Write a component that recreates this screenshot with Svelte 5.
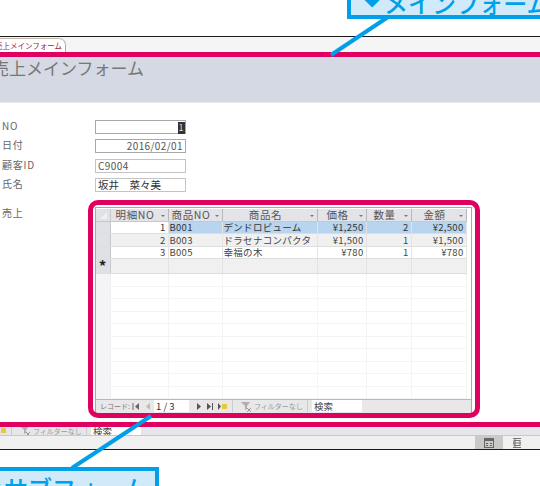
<script lang="ts">
  const fields = [
    { label: '日付', value: '2016/02/01', cls: 'right' },
    { label: '顧客ID', value: 'C9004', cls: 'soft' },
    { label: '氏名', value: '坂井　菜々美', cls: 'soft name' },
  ];

  const columns = ['明細NO', '商品NO', '商品名', '価格', '数量', '金額'];

  const rows = [
    { id: 1, code: 'B001', name: 'デンドロビューム', price: '¥1,250', qty: 2, total: '¥2,500' },
    { id: 2, code: 'B003', name: 'ドラセナコンパクタ', price: '¥1,500', qty: 1, total: '¥1,500' },
    { id: 3, code: 'B005', name: '幸福の木', price: '¥780', qty: 1, total: '¥780' },
  ];

  const blanks = Array(10).fill(0);
</script>

{#snippet navbar(record)}
  <div class="nav-inner">
    <span class="nav-label">レコード:</span>
    <svg class="nav-first" width="8" height="7" viewBox="0 0 8 7"><path d="M1 0v7" stroke="#666" /><path d="M7 0v7L3 3.500z" fill="#666" /></svg>
    <svg class="nav-prev" width="5" height="7" viewBox="0 0 5 7"><path d="M4 0v7L0 3.500z" fill="#bbb" /></svg>
    <span class="nav-record">{record}</span>
    <svg class="nav-next" width="5" height="7" viewBox="0 0 5 7"><path d="M1 0v7l4-3.500z" fill="#555" /></svg>
    <svg class="nav-last" width="7" height="7" viewBox="0 0 7 7"><path d="M0 0v7l4-3.500z" fill="#555" /><path d="M5.500 0v7" stroke="#555" /></svg>
    <svg class="nav-new" width="9" height="7" viewBox="0 0 9 7"><path d="M0 0v7l3-3.500z" fill="#555" /><rect x="4" y="1" width="5" height="5" fill="#e8c840" /></svg>
    <span class="nav-sep"></span>
    <svg class="nav-filter" width="11" height="11" viewBox="0 0 11 11"><path d="M0 1h9L6 5v3L4 9V5z" fill="#b0b0b0" /><path d="M6 7l4 4M10 7l-4 4" stroke="#999" /></svg>
    <span class="nav-nofilter">フィルターなし</span>
    <span class="nav-search">検索</span>
  </div>
{/snippet}

<div class="page">
  <div class="window">
    <div class="tabs">
      <div class="tab">売上メインフォーム</div>
    </div>
    <div class="banner">売上メインフォーム</div>

    <div class="detail">
      <div class="fields">
        <span class="field-label">NO</span>
        <div class="field-box right current"><span class="caret">1</span></div>
        {#each fields as f}
          <span class="field-label">{f.label}</span>
          <div class="field-box {f.cls}">{f.value}</div>
        {/each}
      </div>

      <div class="sales">
        <span class="field-label">売上</span>
        <div class="subform">
          <div class="sheet">
            <table>
              <colgroup>
                <col style="width: 14px" />
                <col style="width: 58px" />
                <col style="width: 54px" />
                <col style="width: 95px" />
                <col style="width: 49px" />
                <col style="width: 45px" />
                <col style="width: 55px" />
              </colgroup>
              <thead>
                <tr>
                  <th class="selector corner"><i></i></th>
                  {#each columns as c}
                    <th><span>{c}</span><i class="sort"></i></th>
                  {/each}
                </tr>
              </thead>
              <tbody>
                {#each rows as r, i}
                  <tr class:picked={i === 0} class:odd={i === 1}>
                    <td class="selector"></td>
                    <td class="num">{r.id}</td>
                    <td>{r.code}</td>
                    <td>{r.name}</td>
                    <td class="num">{r.price}</td>
                    <td class="num">{r.qty}</td>
                    <td class="num">{r.total}</td>
                  </tr>
                {/each}
                <tr class="newrow">
                  <td class="selector star">*</td>
                  <td></td><td></td><td></td><td></td><td></td><td></td>
                </tr>
                {#each blanks as _}
                  <tr class="blank">
                    <td class="selector"></td>
                    <td></td><td></td><td></td><td></td><td></td><td></td>
                  </tr>
                {/each}
              </tbody>
            </table>
          </div>
          <div class="subnav">{@render navbar('1 / 3')}</div>
        </div>
      </div>
    </div>

    <div class="mainnav">{@render navbar('1 / 6')}</div>

    <div class="status">
      <span class="view active">
        <svg width="10" height="10" viewBox="0 0 10 10"><rect x="0.500" y="0.500" width="9" height="9" fill="none" stroke="#666" /><path d="M0 2h10" stroke="#666" stroke-width="2" /><path d="M2 5.500h2M6 5.500h2M2 7.500h2M6 7.500h2" stroke="#666" /></svg>
      </span>
      <span class="view">
        <svg width="10" height="10" viewBox="0 0 10 10"><path d="M1 .5h8M1 9.500h8M1 5h8M3 .5v9" fill="none" stroke="#777" /><rect x="2" y="2.500" width="6" height="5" fill="none" stroke="#777" /></svg>
      </span>
      <span class="view">
        <svg width="10" height="10" viewBox="0 0 10 10"><rect x="0.500" y="0.500" width="9" height="9" fill="none" stroke="#777" /></svg>
      </span>
    </div>
  </div>

  <div class="pink-main"></div>
  <div class="pink-sub"></div>

  <svg class="leaders" width="540" height="486" viewBox="0 0 540 486">
    <path d="M331 55L388 17M151 416L72 468" stroke="#00a0e9" stroke-width="4" fill="none" />
  </svg>

  <div class="callout callout-main"><span class="mark">◆</span>メインフォーム</div>
  <div class="callout callout-sub"><span class="mark">◆</span>サブフォーム</div>
</div>

<style>
  :global(body) {
    margin: 0;
    background: #fff;
  }
  .page {
    position: relative;
    width: 540px;
    height: 486px;
    overflow: hidden;
    padding-top: 36px;
    box-sizing: border-box;
    font-family: "Noto Sans CJK JP", "Liberation Sans", sans-serif;
    font-size: 10px;
    color: #444;
  }
  .window {
    border-top: 1px solid #1a1a1a;
    border-bottom: 1px solid #1a1a1a;
    height: 414px;
    box-sizing: border-box;
    display: flex;
    flex-direction: column;
    overflow: hidden;
  }
  .tabs {
    height: 15px;
    background: #f5f5f5;
    flex-shrink: 0;
    padding-top: 1px;
    box-sizing: border-box;
  }
  .tab {
    width: 66px;
    height: 14px;
    box-sizing: border-box;
    background: #fff;
    border-top: 1px solid #c8b8a8;
    border-right: 1px solid #b8a898;
    border-radius: 0 7px 0 0;
    font-size: 7.500px;
    line-height: 14px;
    color: #a02040;
    white-space: nowrap;
    overflow: hidden;
    text-indent: -5px;
  }
  .banner {
    height: 51px;
    flex-shrink: 0;
    padding-top: 3px;
    box-sizing: border-box;
    background: #d5d9e3;
    border-bottom: 1px solid #e8e8ec;
    font-size: 17px;
    line-height: 26px;
    color: #777;
    white-space: nowrap;
    text-indent: -8px;
    overflow: hidden;
  }
  .detail {
    height: 321px;
    flex-shrink: 0;
    padding: 17px 0 0 2px;
    box-sizing: border-box;
  }
  .fields {
    display: grid;
    grid-template-columns: 93px 91px;
    grid-auto-rows: 14px;
    row-gap: 5.300px;
  }
  .field-label {
    font-size: 10px;
    line-height: 12px;
    letter-spacing: 0.8px;
    color: #666;
  }
  .field-box {
    box-sizing: border-box;
    height: 14px;
    border: 1px solid #a8a8a8;
    background: #fff;
    padding: 0 2px;
    font-size: 10px;
    line-height: 12px;
    letter-spacing: 0.4px;
    color: #555;
    white-space: nowrap;
  }
  .field-box.right {
    text-align: right;
  }
  .field-box.soft {
    border-color: #c4c4c4;
  }
  .field-box.name {
    font-size: 10.500px;
    letter-spacing: 0;
    color: #333;
  }
  .field-box.current {
    padding-right: 0;
  }
  .caret {
    display: inline-block;
    background: #333;
    color: #ddd;
    padding: 0 1px;
    font-size: 9px;
    height: 12px;
  }
  .sales {
    display: grid;
    grid-template-columns: 93px 377px;
    margin-top: 15px;
  }
  .subform {
    height: 207px;
    box-sizing: border-box;
    border: 1px solid #a8a8a8;
    background: #fff;
    display: flex;
    flex-direction: column;
  }
  .sheet {
    flex: 1;
    min-height: 0;
    padding-top: 1px;
    overflow: hidden;
  }
  table {
    width: 370px;
    table-layout: fixed;
    border-collapse: collapse;
    font-size: 9.500px;
    letter-spacing: 0.3px;
    color: #444;
  }
  th {
    height: 12px;
    padding: 0 8px 0 0;
    box-sizing: border-box;
    background: #e4e4e8;
    border-right: 1px solid #b8b8bc;
    border-bottom: 1px solid #c8c8cc;
    font-weight: 400;
    font-size: 10.500px;
    letter-spacing: 0.6px;
    line-height: 12px;
    color: #555;
    position: relative;
    white-space: nowrap;
    text-align: center;
    overflow: hidden;
  }
  .sort {
    position: absolute;
    right: 3px;
    top: 6px;
    border-left: 2px solid transparent;
    border-right: 2px solid transparent;
    border-top: 2px solid #777;
  }
  .corner i {
    position: absolute;
    right: 3px;
    bottom: 2px;
    border-left: 7px solid transparent;
    border-bottom: 7px solid #f0f0f2;
  }
  td {
    height: 12.500px;
    padding: 0 2px 0 1px;
    border-right: 1px solid #e4e4e4;
    border-bottom: 1px solid #dedede;
    line-height: 11px;
    white-space: nowrap;
    overflow: hidden;
    box-sizing: border-box;
  }
  .num {
    text-align: right;
  }
  th.selector,
  td.selector {
    padding: 0;
    background: #dfe1e6;
    border-right: 1px solid #c8c8cc;
  }
  .picked td {
    background: #b8d4ee;
    color: #333;
  }
  .picked td:nth-child(2) {
    background: #fff;
  }
  .picked td.selector {
    background: #dfe1e6;
  }
  .odd td,
  .newrow td {
    background: #f0f0f0;
  }
  .odd td.selector,
  .newrow td.selector {
    background: #dfe1e6;
  }
  td.star {
    text-align: center;
    font-size: 15px;
    font-weight: 700;
    color: #222;
    line-height: 14px;
  }
  .blank td {
    border-right-color: #f4f4f4;
    border-bottom-color: #f4f4f4;
  }
  .blank td.selector {
    background: #f4f4f6;
    border-right-color: #eee;
  }
  .subnav,
  .mainnav {
    flex-shrink: 0;
    overflow: hidden;
  }
  .subnav {
    height: 14px;
    background: #e8e8e8;
    border-top: 1px solid #b8b8b8;
    box-sizing: border-box;
  }
  .mainnav {
    height: 12px;
    background: #e6e6ea;
    border-bottom: 1px solid #c8c8c8;
    box-sizing: border-box;
  }
  .mainnav .nav-inner {
    margin-left: -125px;
  }
  .nav-inner {
    display: flex;
    align-items: center;
    width: 377px;
    height: 13px;
    font-size: 7px;
    color: #777;
    white-space: nowrap;
  }
  .nav-label {
    width: 36px;
    padding-left: 4px;
    box-sizing: border-box;
    flex-shrink: 0;
  }
  .nav-first {
    flex-shrink: 0;
  }
  .nav-prev {
    margin-left: 6px;
    flex-shrink: 0;
  }
  .nav-record {
    margin-left: 3px;
    width: 35px;
    flex-shrink: 0;
    height: 12px;
    line-height: 12px;
    background: #fff;
    color: #333;
    font-size: 9.500px;
    padding-left: 2px;
    box-sizing: border-box;
  }
  .nav-next {
    margin-left: 7px;
    flex-shrink: 0;
  }
  .nav-last {
    margin-left: 6px;
    flex-shrink: 0;
  }
  .nav-new {
    margin-left: 4px;
    flex-shrink: 0;
  }
  .nav-sep {
    width: 1px;
    height: 12px;
    margin-left: 5px;
    background: #ccc;
    flex-shrink: 0;
  }
  .nav-filter {
    margin-left: 8px;
    flex-shrink: 0;
  }
  .nav-nofilter {
    width: 54px;
    box-sizing: border-box;
    flex-shrink: 0;
    margin-left: 2px;
    color: #999;
    border-right: 1px solid #ccc;
    line-height: 12px;
  }
  .nav-search {
    margin-left: 4px;
    width: 50px;
    flex-shrink: 0;
    height: 12px;
    line-height: 12px;
    background: #fff;
    color: #444;
    font-size: 9.500px;
    padding-left: 2px;
    box-sizing: border-box;
  }
  .status {
    flex: 1;
    min-height: 0;
    background: #f0f0f0;
    display: flex;
    justify-content: flex-end;
    margin-right: -19px;
  }
  .view {
    width: 28px;
    display: flex;
    align-items: center;
    justify-content: center;
  }
  .view.active {
    background: #c8cac8;
  }
  .pink-main {
    position: absolute;
    left: -10px;
    top: 52px;
    width: 560px;
    height: 375px;
    box-sizing: border-box;
    border: 5px solid #e00060;
    pointer-events: none;
  }
  .pink-sub {
    position: absolute;
    left: 88px;
    top: 200px;
    width: 392px;
    height: 218px;
    box-sizing: border-box;
    border: 5px solid #e00060;
    border-radius: 10px;
    pointer-events: none;
  }
  .leaders {
    position: absolute;
    left: 0;
    top: 0;
    pointer-events: none;
  }
  .callout {
    position: absolute;
    box-sizing: border-box;
    border: 4px solid #00a0e9;
    background: #d0eafa;
    color: #00a0e9;
    font-size: 24px;
    font-weight: 500;
    white-space: nowrap;
  }
  .mark {
    display: inline-block;
    width: 24px;
    font-size: 17px;
    text-align: center;
    vertical-align: 7px;
    line-height: 1;
  }
  .callout-main {
    left: 347px;
    top: -16px;
    width: 220px;
    height: 35px;
    line-height: 30px;
    padding-left: 9px;
  }
  .callout-sub {
    left: -30px;
    top: 467px;
    width: 189px;
    height: 50px;
    line-height: 33px;
    padding-left: 6px;
  }
</style>
